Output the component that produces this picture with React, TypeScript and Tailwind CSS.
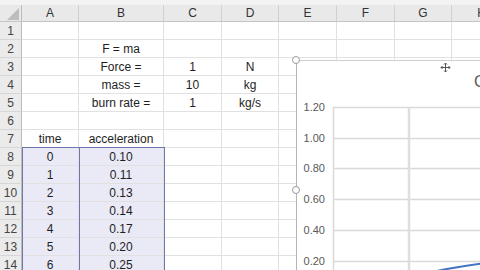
const widths = [57, 85, 58, 57, 58, 58, 57, 60];
const letters = ["A", "B", "C", "D", "E", "F", "G", "H"];

const data: Record<number, string[]> = {
  2: ["", "F = ma"],
  3: ["", "Force =", "1", "N"],
  4: ["", "mass =", "10", "kg"],
  5: ["", "burn rate =", "1", "kg/s"],
  7: ["time", "acceleration"],
  8: ["0", "0.10"],
  9: ["1", "0.11"],
  10: ["2", "0.13"],
  11: ["3", "0.14"],
  12: ["4", "0.17"],
  13: ["5", "0.20"],
  14: ["6", "0.25"],
  15: ["7", "0.33"],
};

const rows = Array.from({ length: 15 }, (_, i) => i + 1);

function Row({ n }: { n: number }) {
  const values = data[n] || [];
  const selected = n >= 8;
  return (
    <div className="flex h-[18px]">
      <div className="w-[22px] shrink-0 flex items-center justify-center bg-[#ebebeb] border-r border-b border-r-[#bcbcbc] border-b-[#d6d6d6] text-[12px] text-[#444]">
        {n}
      </div>
      {widths.map((w, i) => (
        <div
          key={i}
          style={{ width: w }}
          className={`shrink-0 flex items-center justify-center border-r border-b border-[#e1e1e1] text-[12px] text-[#1e1e1e] whitespace-nowrap ${
            selected && i < 2 ? "bg-[#eaeaf7]" : ""
          }`}
        >
          {values[i] || ""}
        </div>
      ))}
    </div>
  );
}

function MoveCursor() {
  return (
    <svg width="11" height="11" viewBox="0 0 11 11" className="absolute left-[143px] top-[1px]">
      <g stroke="#555" strokeWidth="1" fill="none">
        <path d="M5.5 1v9M1 5.5h9" />
        <path d="M4 2.5l1.5-1.5 1.5 1.5M4 8.5l1.5 1.5 1.5-1.5M2.5 4l-1.5 1.5 1.5 1.5M8.5 4l1.5 1.5-1.5 1.5" />
      </g>
    </svg>
  );
}

function Chart() {
  const ticks = [
    { label: "1.20", y: 46 },
    { label: "1.00", y: 77 },
    { label: "0.80", y: 107 },
    { label: "0.60", y: 138 },
    { label: "0.40", y: 169 },
    { label: "0.20", y: 200 },
  ];
  return (
    <div className="absolute left-[296px] top-[60px] w-[200px] h-[230px] bg-white border-l border-t border-l-[#b5b5b5] border-t-[#cfcfcf]">
      <svg width="200" height="230" className="absolute left-0 top-0">
        {ticks.map((t) => (
          <g key={t.label}>
            <line x1="36" x2="200" y1={t.y + 0.5} y2={t.y + 0.5} stroke="#d9d9d9" strokeWidth="1.5" />
            <text
              x="28"
              y={t.y + 4}
              textAnchor="end"
              fontSize="11"
              fill="#595959"
              fontFamily="'Liberation Sans', Arial, sans-serif"
            >
              {t.label}
            </text>
          </g>
        ))}
        <line x1="36.5" x2="36.5" y1="46" y2="230" stroke="#d9d9d9" strokeWidth="1.5" />
        <line x1="112" x2="112" y1="46" y2="230" stroke="#dedede" strokeWidth="2.5" />
        <text
          x="177"
          y="26"
          fontSize="16"
          fill="#595959"
          fontFamily="'Liberation Sans', Arial, sans-serif"
        >
          Chart Title
        </text>
        <path d="M135 211 Q158 206 188 202" stroke="#4472c4" strokeWidth="2" fill="none" />
      </svg>
      <MoveCursor />
    </div>
  );
}

export default function App() {
  return (
    <div className="relative w-[480px] h-[270px] overflow-hidden bg-white font-['Liberation_Sans',Arial,sans-serif]">
      <div className="h-[5px] bg-[#f3f3f3]" />
      <div className="flex h-[17px] bg-[#e9e9e9] border-b border-[#c4c4c4]">
        <div className="w-[22px] shrink-0 relative border-r border-[#bcbcbc]">
          <svg width="22" height="17" className="absolute left-0 top-0">
            <polygon points="19,3 19,15 7,15" fill="#bdbdbd" />
          </svg>
        </div>
        {widths.map((w, i) => (
          <div
            key={i}
            style={{ width: w }}
            className="shrink-0 flex items-center justify-center border-r border-[#d0d0d0] text-[12px] text-[#333]"
          >
            {letters[i]}
          </div>
        ))}
      </div>
      {rows.map((n) => (
        <Row key={n} n={n} />
      ))}

      {/* range outlines for chart data */}
      <div className="absolute left-[22px] top-[147px] w-[58px] h-[140px] border border-[#6f76ad]" />
      <div className="absolute left-[79px] top-[147px] w-[86px] h-[140px] border border-[#6f76ad]" />

      <Chart />

      {/* chart handles */}
      <div className="absolute left-[292px] top-[56px] w-[8px] h-[8px] rounded-full bg-white border border-[#9a9a9a]" />
      <div className="absolute left-[292px] top-[186px] w-[8px] h-[8px] rounded-full bg-white border border-[#9a9a9a]" />
    </div>
  );
}
